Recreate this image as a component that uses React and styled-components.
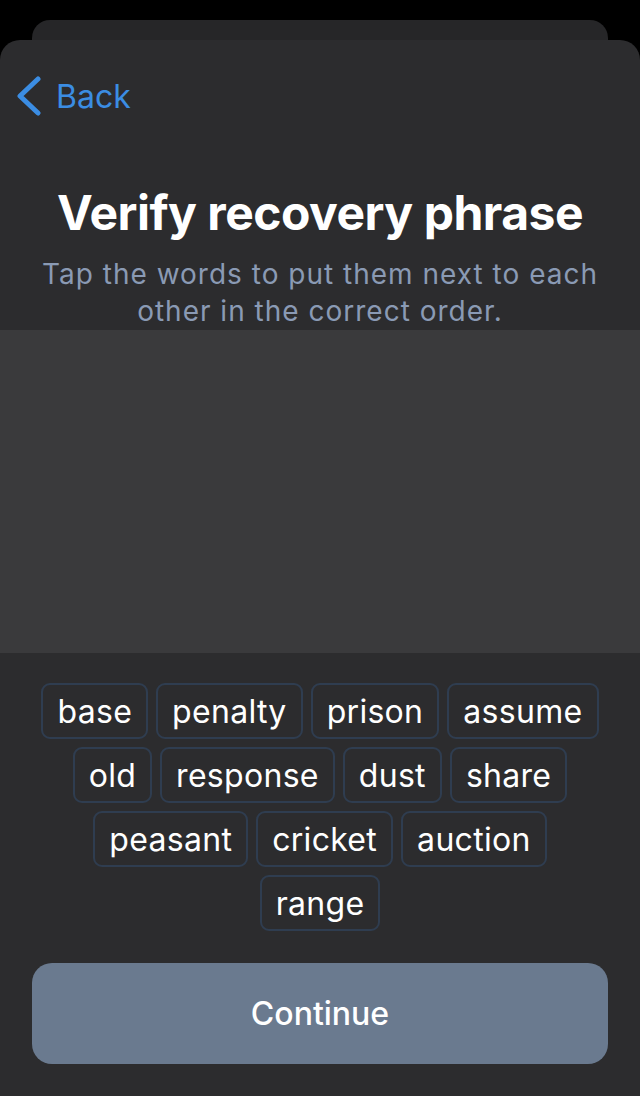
import React from "react";
import styled, { createGlobalStyle } from "styled-components";

const GlobalStyle = createGlobalStyle`
  html, body {
    margin: 0;
    padding: 0;
    background: #000;
    font-family: Inter, "Noto Sans", "Liberation Sans", sans-serif;
    -webkit-font-smoothing: antialiased;
  }
`;

const Screen = styled.div`
  width: 640px;
  height: 1096px;
  padding-top: 20px;
  box-sizing: border-box;
  display: flex;
  flex-direction: column;
  overflow: hidden;
  background: #000;
`;

const BackCard = styled.div`
  height: 20px;
  margin: 0 32px;
  background: #262628;
  border-radius: 18px 18px 0 0;
  flex-shrink: 0;
`;

const Sheet = styled.div`
  flex: 1;
  display: flex;
  flex-direction: column;
  background: #2c2c2e;
  border-radius: 20px 20px 0 0;
`;

const Nav = styled.div`
  height: 112px;
  display: flex;
  align-items: center;
  padding: 0 16px;
  box-sizing: border-box;
`;

const BackButton = styled.button`
  display: flex;
  align-items: center;
  gap: 14px;
  background: none;
  border: none;
  padding: 0;
  color: #3b8de3;
  font-family: inherit;
  font-size: 32px;
  cursor: pointer;
`;

const Title = styled.h1`
  margin: 32px 0 0;
  font-size: 48px;
  line-height: 58px;
  font-weight: 700;
  color: #fff;
  text-align: center;
  letter-spacing: -0.5px;
`;

const Subtitle = styled.p`
  margin: 14px 0 0;
  padding: 0 30px;
  font-size: 28px;
  line-height: 37px;
  letter-spacing: 1px;
  color: #8a9ab4;
  text-align: center;
`;

const DropArea = styled.div`
  height: 323px;
  background: #3a3a3c;
  flex-shrink: 0;
`;

const Words = styled.div`
  display: flex;
  flex-wrap: wrap;
  justify-content: center;
  gap: 8px;
  padding: 30px 40px 0;
`;

const Chip = styled.button`
  height: 56px;
  padding: 0 14px;
  box-sizing: border-box;
  background: #2c2c2e;
  border: 2px solid #2f3d50;
  border-radius: 9px;
  color: #fff;
  font-family: inherit;
  font-size: 32px;
  letter-spacing: 0.3px;
  cursor: pointer;
`;

const ContinueButton = styled.button`
  margin: 32px 32px 0;
  height: 101px;
  background: #6a7a8f;
  border: none;
  border-radius: 20px;
  color: #fff;
  font-family: inherit;
  font-size: 32px;
  font-weight: 500;
`;

const words = [
  "base", "penalty", "prison", "assume",
  "old", "response", "dust", "share",
  "peasant", "cricket", "auction", "range",
];

export default function App() {
  return (
    <>
      <GlobalStyle />
      <Screen>
        <BackCard />
        <Sheet>
          <Nav>
            <BackButton>
              <svg width="26" height="40" viewBox="0 0 26 40">
                <path
                  d="M22 3 L4 20 L22 37"
                  fill="none"
                  stroke="#3b8de3"
                  strokeWidth="5"
                  strokeLinecap="round"
                  strokeLinejoin="round"
                />
              </svg>
              Back
            </BackButton>
          </Nav>
          <Title>Verify recovery phrase</Title>
          <Subtitle>Tap the words to put them next to each other in the correct order.</Subtitle>
          <DropArea />
          <Words>
            {words.map((w) => (
              <Chip key={w}>{w}</Chip>
            ))}
          </Words>
          <ContinueButton>Continue</ContinueButton>
        </Sheet>
      </Screen>
    </>
  );
}
